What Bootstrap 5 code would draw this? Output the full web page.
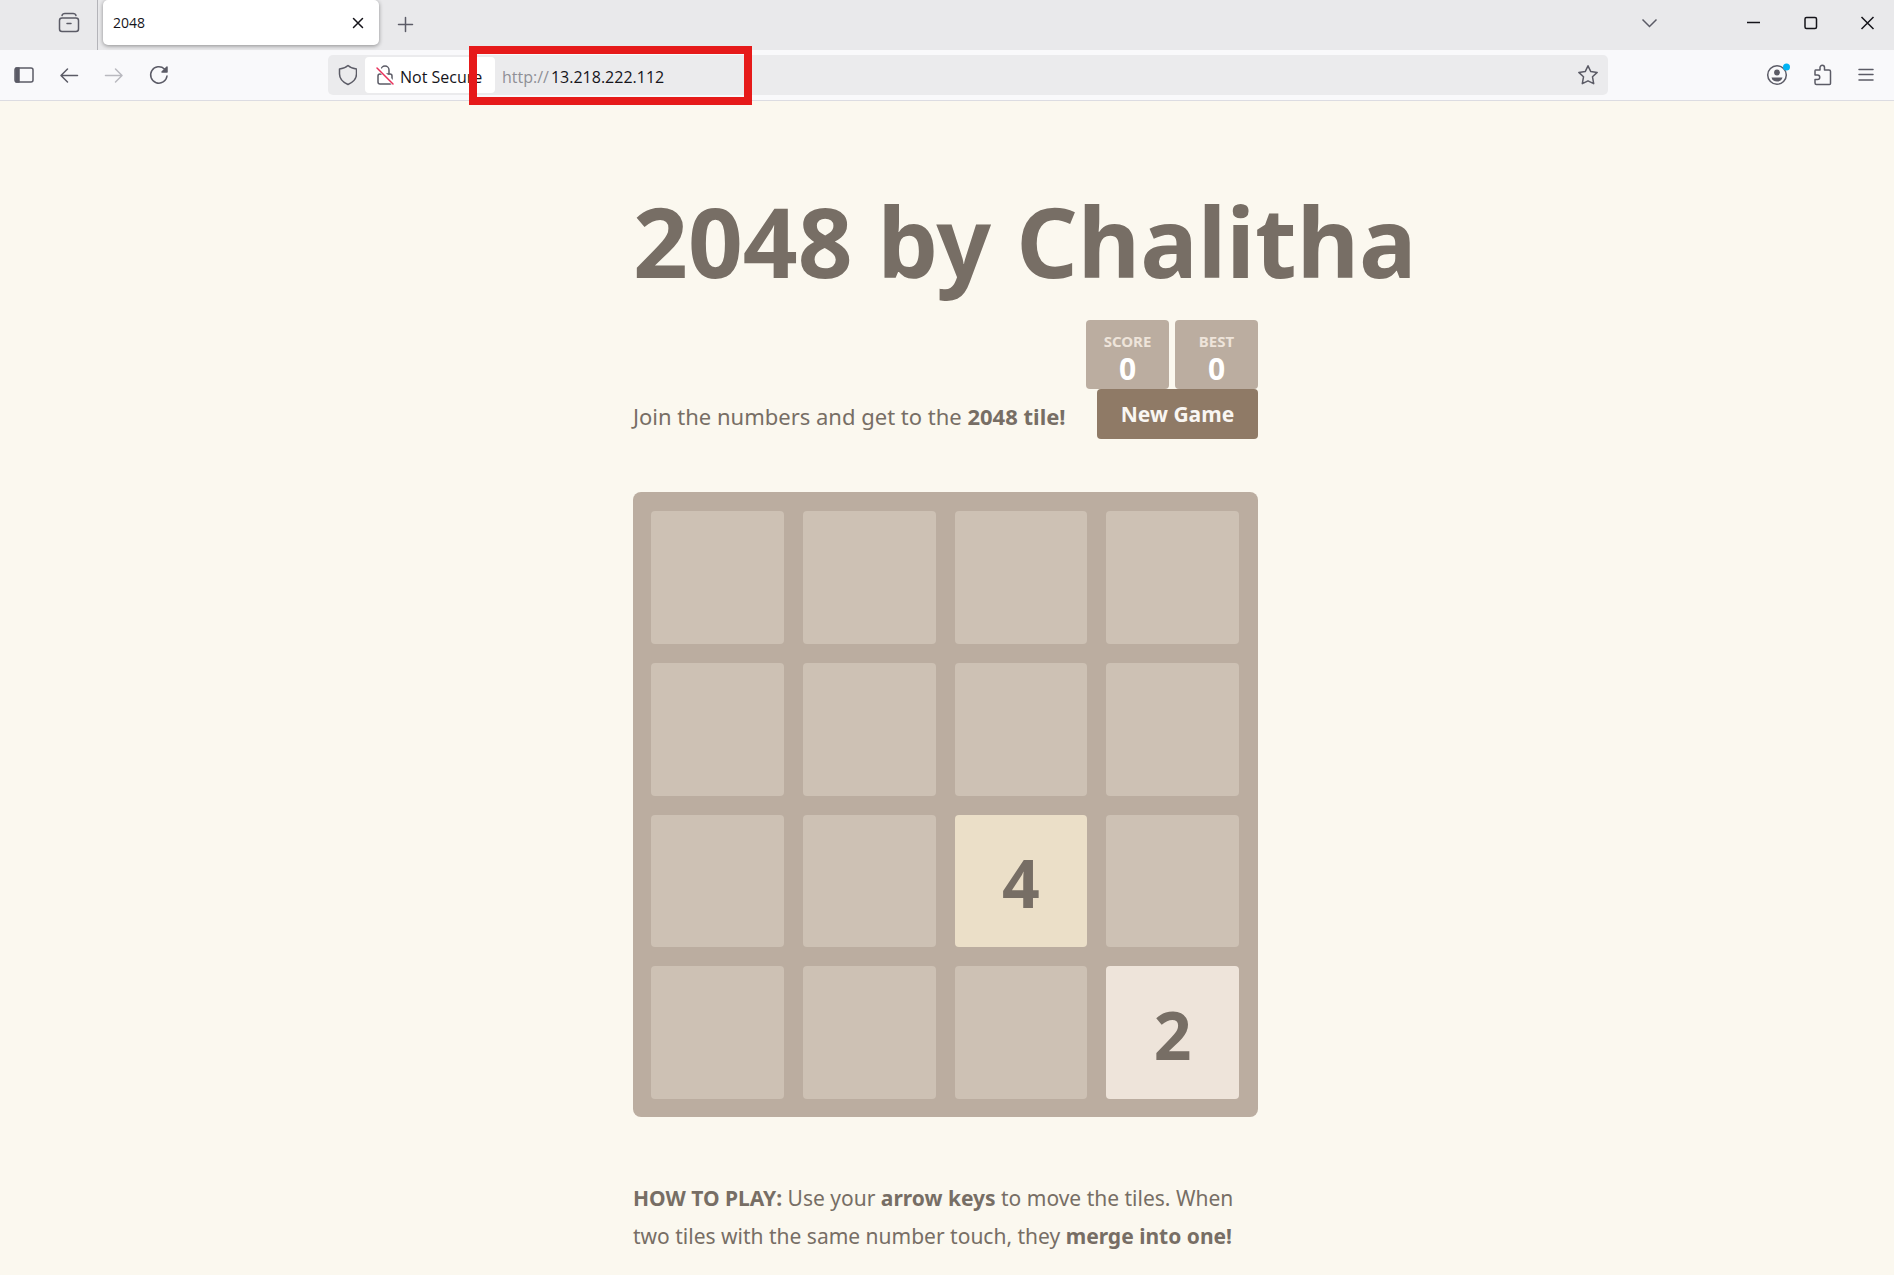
<!DOCTYPE html>
<html lang="en">
<head>
<meta charset="utf-8">
<meta name="viewport" content="width=device-width, initial-scale=1">
<title>2048</title>
<link href="https://cdn.jsdelivr.net/npm/bootstrap@5.3.0/dist/css/bootstrap.min.css" rel="stylesheet">
<style>
  body { background: #fbf8ef; color: #776e65; font-family: "Noto Sans", "Open Sans", sans-serif; }
  svg { display: block; fill: none; stroke: #5b5b66; stroke-width: 1.5; stroke-linecap: round; stroke-linejoin: round; }
  .chrome-ui { font-family: "Open Sans", "Noto Sans", sans-serif; color: #15141a; }
  .chrome-ui button { border: 0; background: transparent; padding: 0; color: inherit; }
  .tab-strip { height: 50px; background: #e9e9eb; }
  .archive-slot { width: 98px; border-right: 1px solid #b4b4b9; padding-left: 58px; }
  .page-tab { width: 276px; height: 45px; margin: 0 17px 0 5px; padding: 0 11px 0 10px; background: #fff; border-radius: 5px; box-shadow: 0 1px 4px rgba(0,0,0,.4); font-size: 14px; }
  .page-tab svg { stroke: #15141a; }
  .win-buttons { gap: 33px; padding-right: 14px; }
  .win-buttons svg { stroke: #15141a; stroke-linecap: butt; stroke-linejoin: miter; }
  .win-buttons .tab-list svg { stroke: #5b5b66; }
  .tool-bar { height: 51px; background: #f9f9fb; border-bottom: 1px solid #dcdce2; }
  .nav-tools { gap: 21px; width: 328px; padding-left: 12px; }
  .address-bar { height: 40px; background: #ebebed; border-radius: 5px; font-size: 16px; padding-right: 8px; }
  .secure-chip { width: 130px; height: 36px; gap: 3px; }
  .chrome-ui .secure-chip { background: #fff; border-radius: 4px; padding-left: 8px; }
  .chip-label, .url-scheme, .address-bar input { padding: 3px 0 0; }
  .url-scheme { color: #8f8f96; margin-left: 7px; }
  .address-bar input { border: 0; background: transparent; margin-left: 2px; color: #15141a; outline: 0; }
  .right-tools { width: 286px; gap: 20px; padding-right: 16px; }
  .url-highlight { position: absolute; left: 104px; top: -11px; width: 283px; height: 59px; border: 8px solid #e61a1a; pointer-events: none; }
  .game-page { padding: 78px 3px 0 0; }
  .game-box { max-width: 625px; }
  .game-title { font-size: 96px; line-height: 124px; font-weight: 700; white-space: nowrap; color: #776e65; }
  .score-row { gap: 6px; margin-top: 17px; }
  .score-box { min-width: 83px; height: 69px; padding-top: 11px; background: #bbada0; border-radius: 4px; color: #fff; font-weight: 700; font-size: 30px; line-height: 36px; }
  .score-label { font-size: 15px; line-height: 20px; color: #eee4da; }
  .body-text { font-size: 21px; line-height: 38px; }
  .intro { padding-top: 3px; font-size: 22px; }
  .btn-new { --bs-btn-color: #f9f6f2; --bs-btn-bg: #8f7a66; --bs-btn-hover-bg: #7f6b58; --bs-btn-hover-color: #f9f6f2; --bs-btn-padding-x: 0; --bs-btn-padding-y: 0; width: 161px; height: 50px; font-size: 21px; font-weight: 700; border: 0; border-radius: 4px; }
  .btn-new span { display: block; padding-top: 2px; }
  .board { display: grid; grid-template-columns: repeat(4, 1fr); gap: 19px; margin-top: 53px; padding: 19px 19px 18px 18px; background: #bbada0; border-radius: 8px; }
  .cell { aspect-ratio: 1; background: #cdc1b4; border-radius: 4px; font-size: 66px; font-weight: 700; line-height: 80px; }
  .cell-2 { background: #eee4da; }
  .cell-4 { background: #ebdfc8; }
  .cell-2, .cell-4 { padding-top: 2px; }
  .how-to { margin-top: 62px; }
</style>
<script src="https://cdn.jsdelivr.net/npm/bootstrap@5.3.0/dist/js/bootstrap.bundle.min.js"></script>
</head>
<body>
<header class="chrome-ui">
  <div class="tab-strip d-flex">
    <div class="archive-slot d-flex align-items-center pb-1">
      <button type="button" aria-label="Recent browsing"><svg width="22" height="22" viewBox="0 0 22 22"><path d="M4 3.500Q4.500 1.500 7 1.500h8q2.500 0 3 2"/><rect x="1.500" y="6" width="19" height="13.500" rx="2.500"/><path d="M9 11.500h4"/></svg></button>
    </div>
    <div class="page-tab d-flex align-items-center justify-content-between">
      <span>2048</span>
      <button type="button" aria-label="Close tab"><svg width="20" height="20" viewBox="0 0 20 20"><path d="M5.500 5.500l9 9m0-9l-9 9"/></svg></button>
    </div>
    <button type="button" aria-label="New tab"><svg width="20" height="20" viewBox="0 0 20 20"><path d="M9.500 2.500v14M2.500 9.500h14"/></svg></button>
    <div class="win-buttons d-flex align-items-center ms-auto pb-1">
      <button type="button" aria-label="List all tabs" class="tab-list me-5"><svg width="24" height="24" viewBox="0 0 24 24"><path d="M5.500 8.500l7 7 7-7"/></svg></button>
      <button type="button" aria-label="Minimize"><svg width="24" height="24" viewBox="0 0 24 24"><path d="M5 11.500h13"/></svg></button>
      <button type="button" aria-label="Maximize"><svg width="24" height="24" viewBox="0 0 24 24"><rect x="6" y="6.500" width="11.500" height="11" rx="1.500"/></svg></button>
      <button type="button" aria-label="Close"><svg width="24" height="24" viewBox="0 0 24 24"><path d="M5.500 6l12 12M17.500 6l-12 12"/></svg></button>
    </div>
  </div>
  <div class="tool-bar d-flex align-items-center">
    <div class="nav-tools d-flex">
      <button type="button" aria-label="Sidebar"><svg width="24" height="24" viewBox="0 0 24 24"><rect x="3" y="5" width="18" height="14" rx="2"/><path d="M4 5h3v14H4z" fill="#5b5b66"/></svg></button>
      <button type="button" aria-label="Back"><svg width="24" height="24" viewBox="0 0 24 24"><path d="M20.500 12.500H4.500M10.500 6L4 12.500l6.500 6.500"/></svg></button>
      <button type="button" aria-label="Forward"><svg width="24" height="24" viewBox="0 0 24 24" stroke-opacity=".4"><path d="M3.500 12.500h16M13.500 6l6.500 6.500-6.500 6.500"/></svg></button>
      <button type="button" aria-label="Reload"><svg width="24" height="24" viewBox="0 0 24 24"><path d="M20 13a8.200 8.200 0 1 1-2.500-7"/><path d="M20 4v5h-5z" fill="#5b5b66"/></svg></button>
    </div>
    <div class="address-bar d-flex align-items-center flex-grow-1">
      <button type="button" aria-label="Tracking protection" class="px-2"><svg width="21" height="24" viewBox="0 0 21 24"><path d="M12 2.500C9.500 4.800 6.500 5.800 3.500 6V11c0 5 3.500 8.300 8.500 10.500C17 19.300 20.500 16 20.500 11V6C17.500 5.800 14.500 4.800 12 2.500z"/></svg></button>
      <div class="position-relative">
        <button type="button" class="secure-chip d-flex align-items-center text-nowrap"><svg width="24" height="24" viewBox="0 0 24 24"><rect x="5" y="11" width="14" height="10" rx="2"/><path d="M8 11V7a4 4 0 0 1 8 0v4"/><path d="M4 4l17 17" stroke="#fff" stroke-width="4"/><path d="M4 5l16 16" stroke="#e8305a"/></svg><span class="chip-label">Not Secure</span></button>
        <div class="url-highlight"></div>
      </div>
      <label class="url-scheme" for="url">http://</label>
      <input id="url" type="text" class="flex-grow-1" value="13.218.222.112">
      <button type="button" aria-label="Bookmark"><svg width="24" height="24" viewBox="0 0 24 24"><path d="M12 2.800l2.800 5.800 6.400.800-4.700 4.400 1.200 6.900L12 17.800l-5.700 2.900 1.200-6.900L2.800 9.400l6.400-.800z"/></svg></button>
    </div>
    <div class="right-tools d-flex justify-content-end">
      <button type="button" aria-label="Account"><svg width="26" height="24" viewBox="0 0 26 24"><circle cx="13" cy="12" r="9.300"/><circle cx="13" cy="9.500" r="2.900" fill="#5b5b66" stroke="none"/><path d="M7.500 14.500h11q-1 4-5.500 4t-5.500-4z" fill="#5b5b66" stroke="none"/><circle cx="22.500" cy="4" r="3.500" fill="#00b3f4" stroke="none"/></svg></button>
      <button type="button" aria-label="Extensions"><svg width="24" height="24" viewBox="0 0 24 24"><path d="M5.500 7H10V4.500a2 2 0 0 1 4.500 0V7H19q1.500 0 1.500 1.500v12q0 1-1 1h-13q-1.500 0-1.500-1.500v-3.500h2.500a2.200 2.200 0 0 0 0-4.500H5V8q0-1 .500-1z"/></svg></button>
      <button type="button" aria-label="Menu"><svg width="24" height="24" viewBox="0 0 24 24"><path d="M5 6.500h14M5 11.500h14M5 17h14"/></svg></button>
    </div>
  </div>
</header>
<main class="game-page">
  <div class="game-box mx-auto">
    <h1 class="game-title mb-0">2048 by Chalitha</h1>
    <div class="score-row d-flex justify-content-end text-center">
      <div class="score-box"><div class="score-label">SCORE</div>0</div>
      <div class="score-box"><div class="score-label">BEST</div>0</div>
    </div>
    <div class="d-flex justify-content-between align-items-center">
      <p class="body-text intro mb-0 text-nowrap">Join the numbers and get to the <strong>2048 tile!</strong></p>
      <button type="button" class="btn btn-new"><span>New Game</span></button>
    </div>
    <div class="board">
      <div class="cell"></div><div class="cell"></div><div class="cell"></div><div class="cell"></div>
      <div class="cell"></div><div class="cell"></div><div class="cell"></div><div class="cell"></div>
      <div class="cell"></div><div class="cell"></div><div class="cell cell-4 d-flex align-items-center justify-content-center">4</div><div class="cell"></div>
      <div class="cell"></div><div class="cell"></div><div class="cell"></div><div class="cell cell-2 d-flex align-items-center justify-content-center">2</div>
    </div>
    <p class="how-to body-text mb-0"><strong>HOW TO PLAY:</strong> Use your <strong>arrow keys</strong> to move the tiles. When two tiles with the same number touch, they <strong>merge into one!</strong></p>
  </div>
</main>
</body>
</html>
